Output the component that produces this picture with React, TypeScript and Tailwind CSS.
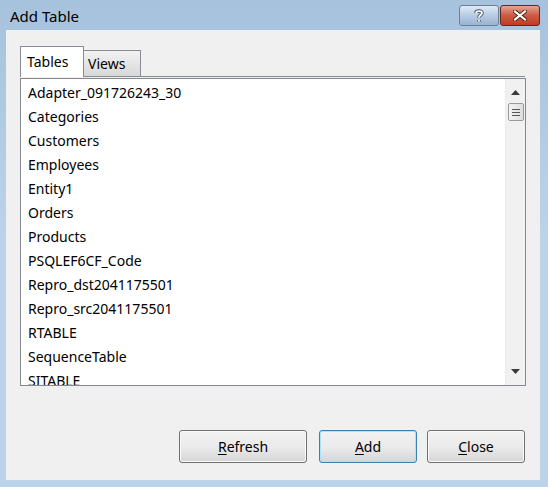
const tables = [
  'Adapter_091726243_30',
  'Categories',
  'Customers',
  'Employees',
  'Entity1',
  'Orders',
  'Products',
  'PSQLEF6CF_Code',
  'Repro_dst2041175501',
  'Repro_src2041175501',
  'RTABLE',
  'SequenceTable',
  'SITABLE',
];

const ui = { fontFamily: '"Noto Sans", "Open Sans", sans-serif' };

function DialogButton({ label, accel, active = false }: { label: string; accel: string; active?: boolean }) {
  const rest = label.slice(1);
  return (
    <button
      className={`flex h-[33px] w-full items-center justify-center rounded-[3px] border bg-gradient-to-b from-[#f2f2f2] via-[#ebebeb] to-[#d6d6d6] text-[14px] text-black ${
        active ? 'border-[#3c7fb1] shadow-[inset_0_0_0_1px_#a8e3f9]' : 'border-[#707070] shadow-[inset_0_0_0_1px_#fbfbfb]'
      }`}
    >
      <span>
        <span className="underline underline-offset-2">{accel}</span>
        {rest}
      </span>
    </button>
  );
}

export default function App() {
  return (
    <div
      className="flex h-[487px] w-[548px] flex-col bg-gradient-to-b from-[#a7c2dd] via-[#bcd3ea] to-[#bcd3ea] pr-[8px] pb-[7px] pl-[6px]"
      style={ui}
    >
      {/* title bar */}
      <div className="flex h-[30px] shrink-0 items-start justify-between">
        <span className="pt-[5px] pl-[4px] text-[15px] text-black">Add Table</span>
        <div className="mt-[5px] flex gap-[1px]">
          <button className="flex h-[21px] w-[40px] items-center justify-center rounded-[3px] border border-[#6c7f95] bg-gradient-to-b from-[#dfe9f5] via-[#b8cce3] to-[#98b2d2]">
            <svg width="10" height="14" viewBox="0 0 10 14">
              <path
                d="M2 4 C2 1.5 8 1.5 8 4 C8 6 5 6 5 8.5 M5 11 L5 12.5"
                fill="none"
                stroke="#40546c"
                strokeWidth="3.6"
              />
              <path
                d="M2 4 C2 1.5 8 1.5 8 4 C8 6 5 6 5 8.5 M5 11 L5 12.5"
                fill="none"
                stroke="#ffffff"
                strokeWidth="1.8"
              />
            </svg>
          </button>
          <button className="flex h-[21px] w-[40px] items-center justify-center rounded-[3px] border border-[#5b2a26] bg-gradient-to-b from-[#e4a495] via-[#cc5a44] to-[#c13b21]">
            <svg width="14" height="11" viewBox="0 0 14 11">
              <path d="M2 1.5 L12 9.5 M12 1.5 L2 9.5" stroke="#4a2018" strokeWidth="4" strokeLinecap="square" />
              <path d="M2 1.5 L12 9.5 M12 1.5 L2 9.5" stroke="#ffffff" strokeWidth="2.2" strokeLinecap="square" />
            </svg>
          </button>
        </div>
      </div>

      {/* client area */}
      <div className="flex flex-1 flex-col bg-[#f0f0f0] pt-[17px] pr-[15px] pl-[14px]">
        {/* tab strip */}
        <div className="relative flex h-[30px] items-end border-b border-[#898c95]">
          <div className="relative z-10 -mb-[1px] flex h-[31px] w-[64px] items-start border border-b-0 border-[#898c95] bg-white pt-[4px] pl-[6px] text-[14px] text-black">
            Tables
          </div>
          <div className="flex h-[26px] w-[57px] items-start border border-b-0 border-l-0 border-[#898c95] bg-gradient-to-b from-[#f2f2f2] to-[#d8d8d8] pt-[2px] pl-[4px] text-[14px] text-black">
            Views
          </div>
          <div className="flex-1" />
        </div>

        {/* list box */}
        <div className="mt-[1px] flex h-[308px] w-[506px] border border-[#828790] bg-white">
          <div className="flex-1 overflow-hidden pt-[2px] pl-[7px]">
            {tables.map((t) => (
              <div key={t} className="h-[24px] text-[14px] leading-[24px] text-black">
                {t}
              </div>
            ))}
          </div>
          {/* vertical scrollbar */}
          <div className="flex w-[20px] flex-col items-center border-l border-[#ececec] bg-[#f1f1f1]">
            <div className="flex h-[24px] w-full items-center justify-center pt-[2px]">
              <svg width="9" height="5" viewBox="0 0 9 5">
                <path d="M4.5 0 L9 5 L0 5 Z" fill="#3a3a3a" />
              </svg>
            </div>
            <div className="flex h-[18px] w-[16px] flex-col items-center justify-center gap-[2px] rounded-[2px] border border-[#9a9a9a] bg-gradient-to-r from-[#f4f4f4] to-[#dedede]">
              <div className="h-[1px] w-[8px] bg-[#555]" />
              <div className="h-[1px] w-[8px] bg-[#555]" />
              <div className="h-[1px] w-[8px] bg-[#555]" />
            </div>
            <div className="flex-1" />
            <div className="flex h-[24px] w-full items-center justify-center pb-[4px]">
              <svg width="9" height="5" viewBox="0 0 9 5">
                <path d="M0 0 L9 0 L4.5 5 Z" fill="#3a3a3a" />
              </svg>
            </div>
          </div>
        </div>

        {/* buttons */}
        <div className="mt-[44px] flex justify-end">
          <div className="w-[128px]">
            <DialogButton label="Refresh" accel="R" />
          </div>
          <div className="ml-[12px] w-[98px]">
            <DialogButton label="Add" accel="A" active />
          </div>
          <div className="ml-[10px] w-[98px]">
            <DialogButton label="Close" accel="C" />
          </div>
        </div>
      </div>
    </div>
  );
}
